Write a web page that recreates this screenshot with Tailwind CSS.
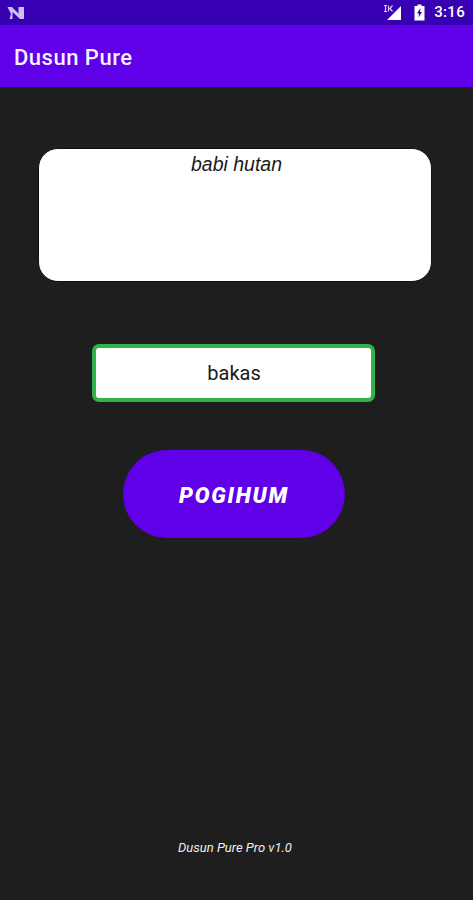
<!DOCTYPE html>
<html lang="en">
<head>
  <meta charset="UTF-8" />
  <meta name="viewport" content="width=device-width, initial-scale=1.0"/>
  <title>Dusun Pure</title>
  <script src="https://cdn.jsdelivr.net/npm/@tailwindcss/browser@4"></script>
</head>
<body class="bg-[#1e1e1e] font-['Roboto',sans-serif]">
  <div class="h-[900px] w-[473px] flex flex-col overflow-hidden relative">

    <!-- Status bar -->
    <div class="h-[25px] bg-[#3700b3] flex items-center pl-[7px] pr-[8px] text-white">
      <svg width="18" height="14" viewBox="0 0 18 14" class="opacity-85">
        <path d="M0.5 1 H5 L11.5 7.5 V1 H17 V13 H13 L5.5 6 V13 H2.5 L4 8 Z" fill="#e8e0fb"/>
      </svg>
      <div class="flex-1"></div>
      <svg width="20" height="17" viewBox="0 0 20 17" class="mr-[11px]">
        <path d="M18 2 V16 H4 Z" fill="#fff"/>
        <path d="M1 1 H11 V9 H1 Z" fill="#3700b3"/>
        <path d="M1 1.5 h3 M1 7.5 h3 M2.5 1.5 v6 M5.5 1.5 v6 M5.5 4.5 h1.5 l2.5 -3 M7 4.5 l2.5 3" stroke="#d8cff5" stroke-width="1.2" fill="none"/>
      </svg>
      <svg width="11" height="17" viewBox="0 0 11 17" class="mr-[9px]">
        <path d="M3.5 0.5 H7.5 V2 H10.5 V16.5 H0.5 V2 H3.5 Z" fill="#fff"/>
        <path d="M6.5 4 L3 9.5 H5 L4.5 13.5 L8 8 H6 Z" fill="#3700b3"/>
      </svg>
      <span class="text-[15px] font-medium leading-none tracking-[0.3px]">3:16</span>
    </div>

    <!-- App bar -->
    <div class="h-[62px] bg-[#5f00e8] flex items-center pl-[14px] pt-[3px]">
      <h1 class="text-[22px] font-medium text-[#f4f0fe] tracking-[0.5px]">Dusun Pure</h1>
    </div>

    <!-- Word card -->
    <div class="mt-[61px] ml-[38px] w-[394px] h-[134px] bg-white border border-[#111] rounded-[20px] flex justify-center">
      <p class="ml-[3px] pt-[1px] text-[19.5px] leading-[28px] italic text-[#1a1a1a] font-['Liberation_Sans',sans-serif]">babi hutan</p>
    </div>

    <!-- Answer input -->
    <div class="mt-[62px] ml-[92px] w-[283px] h-[58px] bg-white border-[4px] border-[#30b348] rounded-[7px] flex items-center justify-center">
      <span class="text-[20px] text-[#1a1a1a] ml-[1px] mb-[1px]">bakas</span>
    </div>

    <!-- Submit -->
    <button class="mt-[48px] ml-[123px] w-[222px] h-[88px] rounded-full bg-[#5f00e8] text-white text-[22px] font-black italic tracking-[1.8px] pt-[2px]">POGIHUM</button>

    <p class="absolute top-[840px] left-0 w-[470px] text-center text-[13px] italic text-[#eeeeee] leading-[16px]">Dusun Pure Pro v1.0</p>
  </div>
</body>
</html>
